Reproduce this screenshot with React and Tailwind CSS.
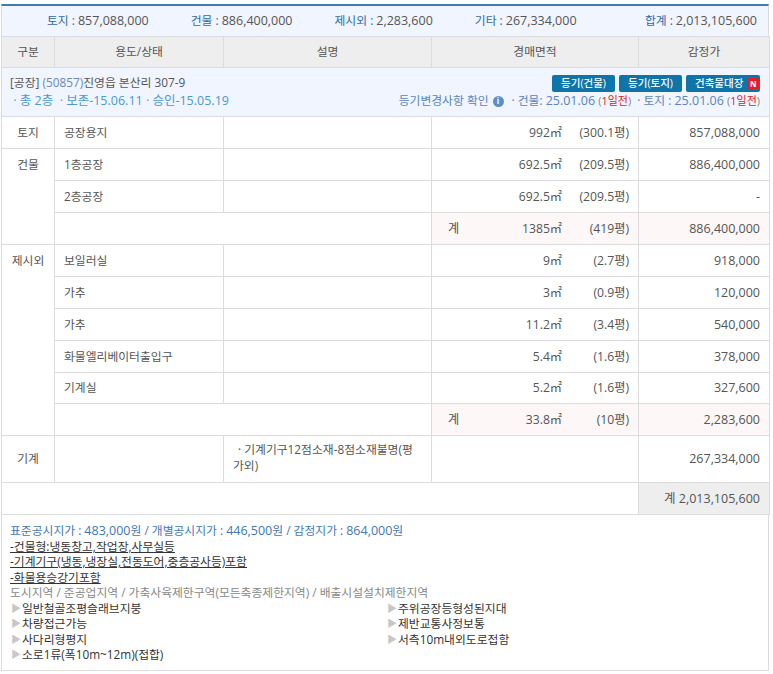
import React from "react";

const summary = [
  ["토지", "857,088,000"],
  ["건물", "886,400,000"],
  ["제시외", "2,283,600"],
  ["기타", "267,334,000"],
];

const cell = "border border-[#dcdcdc] px-[9px] py-0 font-normal";
const num = "text-[12.5px]";

const Area = ({ label, area, py }) => (
  <div className="flex items-center text-[12.2px]">
    <span className="w-[26px] pl-[7px]">{label}</span>
    <span className="w-[102px] text-right">{area}</span>
    <span className="w-[71px] text-right">{py}</span>
  </div>
);

const Row = ({ head, rowSpan, name, area, py, price, short }) => (
  <tr className={short ? "h-[31px]" : "h-[32px]"}>
    {head && (
      <td rowSpan={rowSpan} className={`${cell} text-center ${rowSpan > 1 ? "align-top pt-[8px]" : ""}`}>
        {head}
      </td>
    )}
    <td className={cell}>{name}</td>
    <td className={cell}></td>
    <td className={cell}>
      <Area area={area} py={py} />
    </td>
    <td className={`${cell} ${num} text-right`}>{price}</td>
  </tr>
);

const SubTotal = ({ area, py, price }) => (
  <tr className="h-[32px]">
    <td colSpan={2} className={cell}></td>
    <td className={`${cell} bg-[#fdf7f7]`}>
      <Area label="계" area={area} py={py} />
    </td>
    <td className={`${cell} ${num} bg-[#fdf7f7] text-right`}>{price}</td>
  </tr>
);

const Tri = ({ children }) => (
  <div className="flex text-[#333]">
    <span className="w-[11px] text-[10px] text-[#c8c8c8]">▶</span>
    {children}
  </div>
);

const DocButton = ({ width, children }) => (
  <span className={`flex h-[17px] items-center rounded-[2px] bg-[#0f75a8] text-[10.5px] font-medium text-white ${width}`}>
    {children}
  </span>
);

const Days = () => (
  <span className="text-[11px] text-[#888]">
    (<span className="text-[#e02020]">1일전</span>)
  </span>
);

export default function App() {
  return (
    <div
      className="w-[773px] h-[674px] bg-white pt-[4px] pl-[1px] text-[11.8px] leading-[15.5px] text-[#555]"
      style={{ fontFamily: '"Open Sans", "Noto Sans CJK KR", sans-serif' }}
    >
      <div className="w-[768px]">
        <div className="flex h-[32px] items-center gap-[42px] border-x border-t-2 border-x-[#dcdcdc] border-t-[#3f7cb0] bg-[#f0f5ff] pl-[45px] pr-[11px]">
          {summary.map(([label, value]) => (
            <span key={label}>
              <span className="text-[#2f6aa6]">{label} : </span>
              <span className={num}>{value}</span>
            </span>
          ))}
          <span className="ml-auto">
            <span className="text-[#2f6aa6]">합계 : </span>
            <span className={num}>2,013,105,600</span>
          </span>
        </div>
        <table className="w-[768px] table-fixed border-collapse">
          <colgroup>
            <col className="w-[53px]" />
            <col className="w-[169px]" />
            <col className="w-[208px]" />
            <col className="w-[207px]" />
            <col className="w-[131px]" />
          </colgroup>
          <thead>
            <tr className="h-[31px] bg-[#eeeeee]">
              {["구분", "용도/상태", "설명", "경매면적", "감정가"].map((h) => (
                <th key={h} className={`${cell} text-center font-medium`}>
                  {h}
                </th>
              ))}
            </tr>
          </thead>
          <tbody>
            <tr className="h-[49px] bg-[#f0f5ff]">
              <td colSpan={5} className="border border-[#dcdcdc] pl-[8px] pr-[9px]">
                <div className="flex justify-between">
                  <div>
                    <div className="mb-[2px]">
                      [공장] <span className="text-[#6b87b5]">(50857)</span>진영읍 본산리 307-9
                    </div>
                    <div className="text-[12.5px] text-[#4a9ad0]">
                      <span>&nbsp;· 총 2층 &nbsp;· 보존-15.06.11 · 승인-15.05.19</span>
                    </div>
                  </div>
                  <div className="flex flex-col items-end gap-[1px]">
                    <div className="flex gap-[4px]">
                      <DocButton width="w-[63px] justify-center">등기(건물)</DocButton>
                      <DocButton width="w-[63px] justify-center">등기(토지)</DocButton>
                      <DocButton width="w-[74px] pl-[9px]">
                        건축물대장
                        <span className="ml-[4px] flex h-[12px] w-[12px] items-center justify-center rounded-[2px] bg-[#e0202a] text-[8px] font-bold leading-none">
                          N
                        </span>
                      </DocButton>
                    </div>
                    <div className="flex items-center text-[#5a84bb]">
                      등기변경사항 확인
                      <span className="mx-[4px] flex h-[11px] w-[11px] items-center justify-center rounded-full bg-[#5f8fc0] text-[8px] font-bold leading-none text-white">
                        i
                      </span>
                      <span className="ml-[4px]">
                        · 건물: <span className={num}>25.01.06</span> <Days /> &nbsp;· 토지 : <span className={num}>25.01.06</span> <Days />
                      </span>
                    </div>
                  </div>
                </div>
              </td>
            </tr>
            <Row head="토지" rowSpan={1} name="공장용지" area="992㎡" py="(300.1평)" price="857,088,000" />
            <Row head="건물" rowSpan={3} name="1층공장" area="692.5㎡" py="(209.5평)" price="886,400,000" />
            <Row name="2층공장" area="692.5㎡" py="(209.5평)" price="-" />
            <SubTotal area="1385㎡" py="(419평)" price="886,400,000" />
            <Row head="제시외" rowSpan={6} name="보일러실" area="9㎡" py="(2.7평)" price="918,000" />
            <Row name="가추" area="3㎡" py="(0.9평)" price="120,000" />
            <Row name="가추" area="11.2㎡" py="(3.4평)" price="540,000" />
            <Row name="화물엘리베이터출입구" area="5.4㎡" py="(1.6평)" price="378,000" />
            <Row short name="기계실" area="5.2㎡" py="(1.6평)" price="327,600" />
            <SubTotal area="33.8㎡" py="(10평)" price="2,283,600" />
            <tr className="h-[47px]">
              <td className={`${cell} text-center`}>기계</td>
              <td className={cell}></td>
              <td className={`${cell} pb-[3px]`}>&nbsp;&thinsp;· 기계기구12점소재-8점소재불명(평가외)</td>
              <td className={cell}></td>
              <td className={`${cell} ${num} text-right`}>267,334,000</td>
            </tr>
            <tr className="h-[32px]">
              <td colSpan={4} className={cell}></td>
              <td className={`${cell} ${num} bg-[#eeeeee] text-right`}>계 2,013,105,600</td>
            </tr>
          </tbody>
        </table>
        <div className="h-[156px] border border-t-0 border-[#dcdcdc] pl-[8px] pr-[9px] pt-[8px]">
          <div className="text-[#3f78b5]">
            표준공시지가 : <span className={num}>483,000</span>원 / 개별공시지가 : <span className={num}>446,500</span>원 / 감정지가 : <span className={num}>864,000</span>원
          </div>
          <div className="text-[#333] underline">-건물형:냉동창고,작업장,사무실등</div>
          <div className="text-[#333] underline">-기계기구(냉동,냉장실,전동도어,중층공사등)포함</div>
          <div className="text-[#333] underline">-화물용승강기포함</div>
          <div className="text-[#888]">도시지역 / 준공업지역 / 가축사육제한구역(모든축종제한지역) / 배출시설설치제한지역</div>
          <div className="grid grid-cols-[376px_1fr] pl-[1px]">
            <Tri>일반철골조평슬래브지붕</Tri>
            <Tri>주위공장등형성된지대</Tri>
            <Tri>차량접근가능</Tri>
            <Tri>제반교통사정보통</Tri>
            <Tri>사다리형평지</Tri>
            <Tri>서측10m내외도로접함</Tri>
            <Tri>소로1류(폭10m~12m)(접합)</Tri>
          </div>
        </div>
      </div>
    </div>
  );
}
